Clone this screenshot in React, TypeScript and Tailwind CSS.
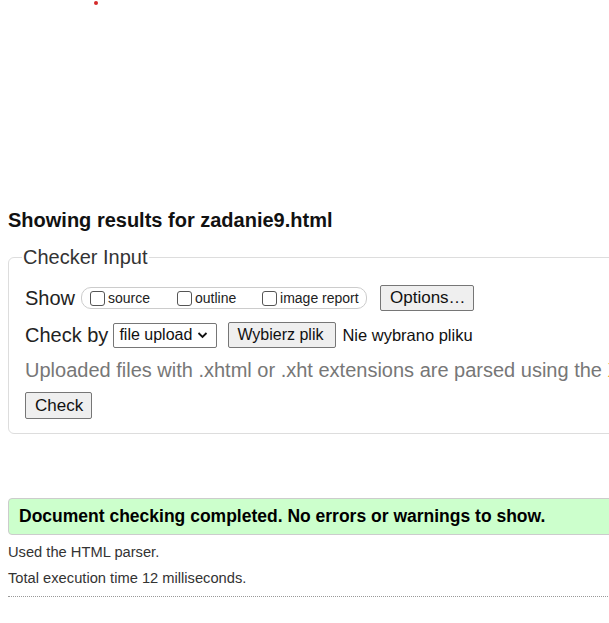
import React from "react";

// Nu HTML Checker results page (clipped on the right)

function Box() {
  return <span className="inline-block w-[15px] h-[15px] border border-[#555] rounded-[3px] bg-white mr-[3px]" />;
}

function Btn({ children, className = "" }: { children: React.ReactNode; className?: string }) {
  return (
    <span className={`inline-flex items-center border border-[#767676] rounded-[2px] bg-[#efefef] text-[#111] ${className}`}>
      {children}
    </span>
  );
}

export default function App() {
  return (
    <div className="w-[609px] h-[623px] overflow-hidden bg-white font-['Liberation_Sans',Arial,sans-serif] text-[#222] relative">
      <span className="absolute left-[94px] top-[1px] w-[4px] h-[4px] rounded-full bg-[#d42a2a]" />
      <div className="w-[900px] pl-[8px] pt-[208px]">
        <h2 className="text-[20px] font-bold leading-[24px] text-[#111]">Showing results for zadanie9.html</h2>

        <fieldset className="mt-[13px] border border-[#ddd] rounded-[6px] pl-[16px] pr-4 pb-[14px] pt-[4px]">
          <legend className="text-[20px] leading-[24px] px-[1px] ml-[-3px] text-[#333]">Checker Input</legend>

          <div className="flex items-center h-[26px] mt-[12px]">
            <span className="text-[20px]">Show</span>
            <span className="ml-[6px] inline-flex items-center h-[22px] w-[286px] border border-[#ccc] rounded-[10px] pl-[8px] text-[14px] text-[#222]">
              <Box />
              <span className="w-[69px]">source</span>
              <Box />
              <span className="w-[67px]">outline</span>
              <Box />
              <span>image report</span>
            </span>
            <Btn className="ml-[13px] h-[26px] w-[94px] pl-[9px] text-[17px]">Options…</Btn>
          </div>

          <div className="flex items-center h-[26px] mt-[11px]">
            <span className="text-[20px]">Check by</span>
            <span className="ml-[5px] inline-flex items-center h-[25px] w-[104px] border border-[#767676] rounded-[2px] pl-[5px] text-[16px] text-[#111]">
              file upload
              <svg className="ml-[5px]" width="11" height="8" viewBox="0 0 11 8">
                <path d="M1.5 2 L5.5 6 L9.5 2" fill="none" stroke="#111" strokeWidth="1.8" />
              </svg>
            </span>
            <Btn className="ml-[11px] h-[26px] w-[108px] pl-[8px] text-[16px]">Wybierz plik</Btn>
            <span className="ml-[6px] text-[16.5px] text-[#111]">Nie wybrano pliku</span>
          </div>

          <p className="text-[20px] leading-[24px] mt-[10px] text-[#777] whitespace-nowrap">
            Uploaded files with .xhtml or .xht extensions are parsed using the <span className="text-[#e8932a]">XML parser.</span>
          </p>

          <Btn className="mt-[10px] h-[27px] w-[67px] pl-[9px] text-[17px]">Check</Btn>
        </fieldset>

        <div className="mt-[64px] h-[37px] flex items-center bg-[#ccffcc] border border-[#ccc] rounded-[4px] pl-[10px]">
          <span className="text-[17.5px] font-bold text-black">Document checking completed. No errors or warnings to show.</span>
        </div>

        <p className="text-[14.7px] leading-[18px] mt-[8px] text-[#333]">Used the HTML parser.</p>
        <p className="text-[14.7px] leading-[18px] mt-[8px] text-[#333]">Total execution time 12 milliseconds.</p>
        <div className="mt-[9px] border-t border-dotted border-[#999]" />
      </div>
    </div>
  );
}
